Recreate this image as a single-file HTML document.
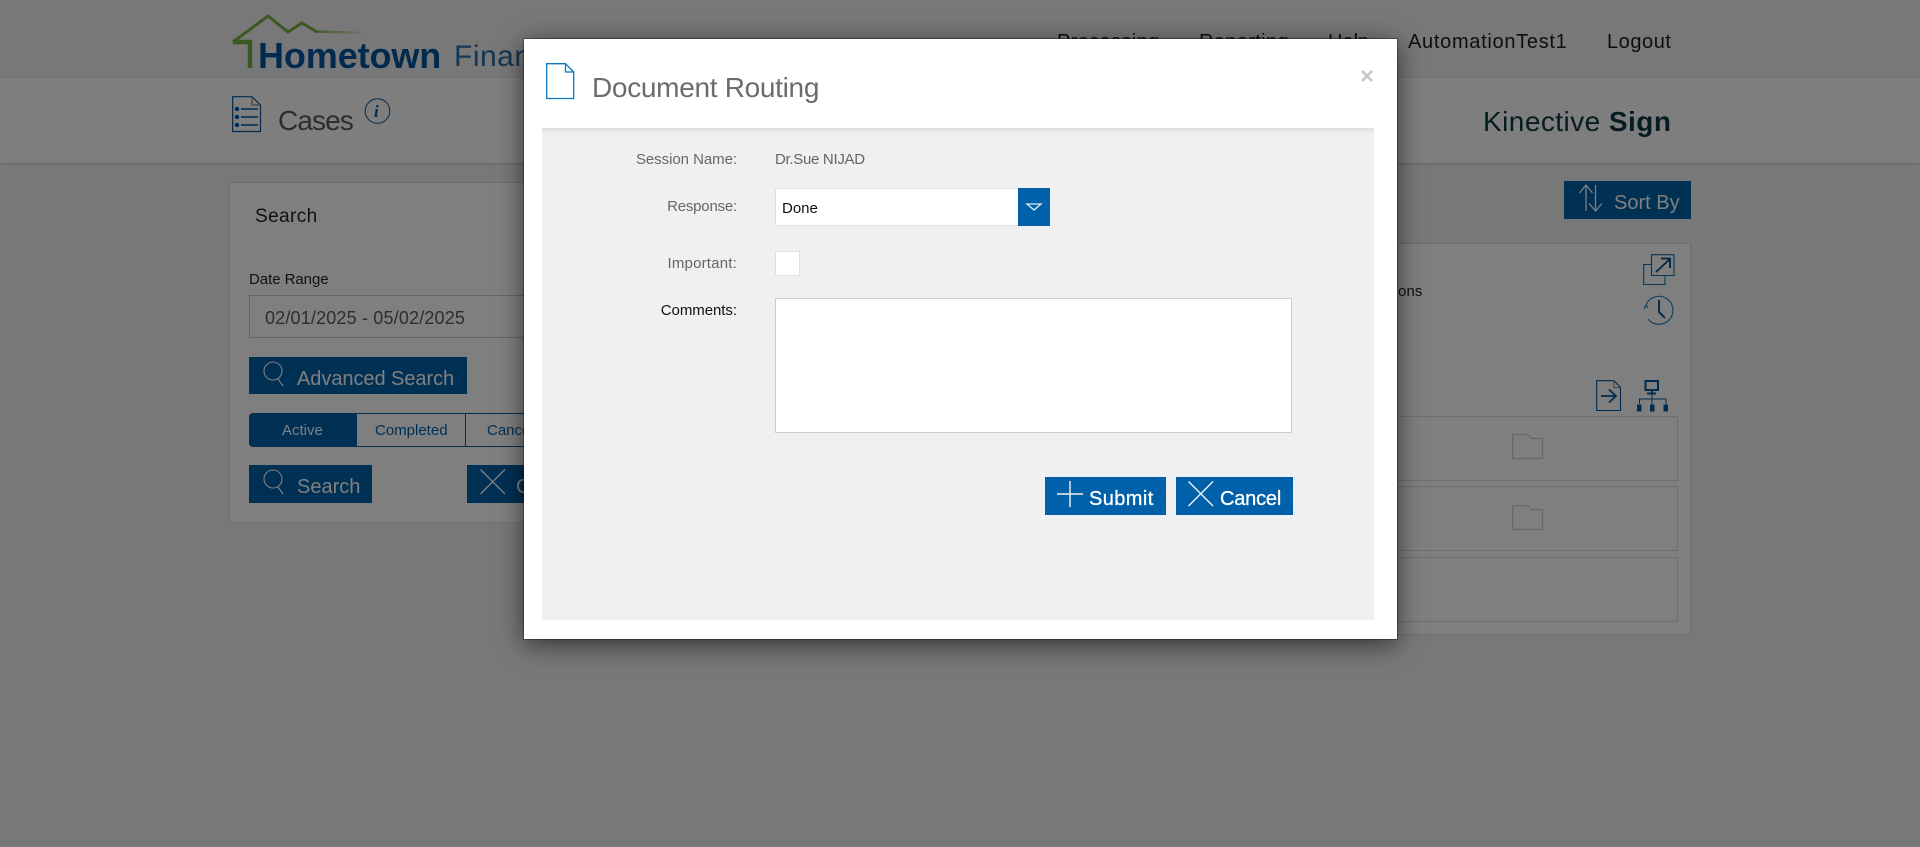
<!DOCTYPE html>
<html><head><meta charset="utf-8"><title>Document Routing</title>
<style>
*{box-sizing:border-box}
html,body{margin:0;padding:0;width:1920px;height:847px;overflow:hidden;background:#f1f1f1;font-family:"Liberation Sans",sans-serif}
.t{position:absolute;white-space:nowrap;line-height:1}
.b{position:absolute;background:#0060a9}
svg{position:absolute;overflow:visible}
#overlay{position:absolute;left:0;top:0;width:1920px;height:847px;background:rgba(0,0,0,.5)}
#modal{position:absolute;left:524px;top:39px;width:873px;height:600px;background:#fff;outline:1px solid rgba(0,0,0,.3);box-shadow:0 5px 24px rgba(0,0,0,.6)}
</style></head><body>
<!-- page -->
<div style="position:absolute;left:0;top:0;width:1920px;height:78px;background:#f0f0f0"></div>
<div style="position:absolute;left:0;top:78px;width:1920px;height:85px;background:#fdfdfd;box-shadow:0 1px 3px rgba(0,0,0,.15)"></div>
<svg style="left:0;top:0" width="500" height="80" fill="none"><defs><linearGradient id="g" x1="310" x2="367" y1="0" y2="0" gradientUnits="userSpaceOnUse"><stop offset="0" stop-color="#76b043"/><stop offset="1" stop-color="#76b043" stop-opacity="0"/></linearGradient></defs><path d="M233 42L268 16L288 32L302 23L317 32" stroke="#76b043" stroke-width="3"/><path d="M316 31.5L367 33" stroke="url(#g)" stroke-width="2.5"/><path d="M233 42H250V68" stroke="#76b043" stroke-width="4.5"/></svg>
<div class="t" style="left:258px;top:38px;font-size:36px;font-weight:bold;color:#00569c;letter-spacing:-.1px">Hometown</div>
<div class="t" style="left:454px;top:42px;font-size:30px;color:#2a6ca8;letter-spacing:.5px">Financial</div>
<div class="t" style="left:1057px;top:32px;font-size:20px;color:#1c1c1c;letter-spacing:.35px">Processing</div>
<div class="t" style="left:1199px;top:32px;font-size:20px;color:#1c1c1c;letter-spacing:.35px">Reporting</div>
<div class="t" style="left:1328px;top:32px;font-size:20px;color:#1c1c1c">Help</div>
<div class="t" style="left:1408px;top:32px;font-size:20px;color:#1c1c1c;letter-spacing:.7px">AutomationTest1</div>
<div class="t" style="left:1607px;top:32px;font-size:20px;color:#1c1c1c;letter-spacing:.55px">Logout</div>
<svg style="left:232px;top:96px" width="30" height="37" fill="none" stroke="#00569c" stroke-width="1.2"><path d="M.7.7H20L28.5 9V35.5H.7Z"/><path d="M20 .7V9H28.5" stroke="#888"/><path d="M9 13H26M9 21H26M9 29H26" stroke-width="1.5"/><circle cx="5" cy="13" r="1.6" fill="#00569c"/><circle cx="5" cy="21" r="1.6" fill="#00569c"/><circle cx="5" cy="29" r="1.6" fill="#00569c"/></svg>
<div class="t" style="left:278px;top:107px;font-size:28px;color:#5a5a5a;letter-spacing:-.9px">Cases</div>
<svg style="left:364px;top:97px" width="28" height="28" fill="none"><circle cx="13.5" cy="14" r="12.3" stroke="#00569c" stroke-width="1"/></svg>
<div class="t" style="left:372px;top:102px;font:italic bold 17px 'Liberation Serif',serif;color:#00569c;margin-left:2px">i</div>
<div class="t" style="left:1483px;top:108px;font-size:28px;color:#0a3a40;letter-spacing:.45px">Kinective <b>Sign</b></div>

<!-- search panel -->
<div style="position:absolute;left:229px;top:182px;width:560px;height:341px;background:#fff;border:1px solid #ddd"></div>
<div class="t" style="left:255px;top:207px;font-size:19px;color:#222;letter-spacing:.4px">Search</div>
<div class="t" style="left:249px;top:272px;font-size:15px;color:#222;letter-spacing:-.05px">Date Range</div>
<div style="position:absolute;left:249px;top:295px;width:400px;height:43px;border:1px solid #ccc;background:#fff"></div>
<div class="t" style="left:265px;top:309px;font-size:18px;color:#5c5c5c;letter-spacing:.17px">02/01/2025 - 05/02/2025</div>
<div class="b" style="left:249px;top:357px;width:218px;height:37px"></div>
<svg style="left:262px;top:361px" width="24" height="28" fill="none" stroke="#fff" stroke-width="1.1"><circle cx="11" cy="10" r="9"/><path d="M16 18L21 25"/></svg>
<div class="t" style="left:297px;top:369px;font-size:20px;color:#fff;letter-spacing:-.05px">Advanced Search</div>
<div class="b" style="left:249px;top:413px;width:108px;height:34px;border-radius:4px 0 0 4px"></div>
<div style="position:absolute;left:357px;top:413px;width:109px;height:34px;border:1px solid #0060a9;border-left:0;background:#fff"></div>
<div style="position:absolute;left:466px;top:413px;width:100px;height:34px;border:1px solid #0060a9;border-left:0;background:#fff"></div>
<div class="t" style="left:282px;top:423px;font-size:15px;color:#fff">Active</div>
<div class="t" style="left:375px;top:423px;font-size:15px;color:#0060a9">Completed</div>
<div class="t" style="left:487px;top:423px;font-size:15px;color:#0060a9">Cancelled</div>
<div class="b" style="left:249px;top:465px;width:123px;height:38px"></div>
<svg style="left:262px;top:469px" width="24" height="28" fill="none" stroke="#fff" stroke-width="1.1"><circle cx="11" cy="10" r="9"/><path d="M16 18L21 25"/></svg>
<div class="t" style="left:297px;top:477px;font-size:20px;color:#fff">Search</div>
<div class="b" style="left:467px;top:465px;width:120px;height:38px"></div>
<svg style="left:480px;top:469px" width="26" height="26" fill="none" stroke="#fff" stroke-width="1.3"><path d="M.5.5L25 25M25 .5L.5 25"/></svg>
<div class="t" style="left:516px;top:477px;font-size:20px;color:#fff">Clear</div>

<!-- right -->
<div class="b" style="left:1564px;top:181px;width:127px;height:38px"></div>
<svg style="left:1578px;top:184px" width="26" height="28" fill="none" stroke="#fff" stroke-width="1.3"><path d="M8 27V1M1.5 9L8 1L14.5 9"/><path d="M17.5 1V27M11 19.5L17.5 27L24 19.5"/></svg>
<div class="t" style="left:1614px;top:193px;font-size:20px;color:#fff">Sort By</div>
<div style="position:absolute;left:1200px;top:243px;width:491px;height:392px;background:#fff;border:1px solid #ddd"></div>
<div class="t" style="left:1398px;top:284px;font-size:15px;color:#222;letter-spacing:.1px">ons</div>
<svg style="left:1643px;top:254px" width="33" height="32" fill="none" stroke="#0a6fb5" stroke-width="1.1"><path d="M8.5 10.5H.7V30.5H22V21"/><path d="M8.5.7H31V21.5H8.5Z"/><path d="M13 18L27 5M18 4.5H27V14" stroke="#00487f" stroke-width="1.8"/></svg>
<svg style="left:1643px;top:294px" width="32" height="32" fill="none" stroke="#0a6fb5" stroke-width="1"><path d="M3 11A14 14 0 1 1 5 25" /><path d="M16 6V18L22 24" stroke-width="1.8" stroke="#00487f"/><path d="M1 15L3 11L5 14" /></svg>
<svg style="left:1596px;top:380px" width="26" height="32" fill="none" stroke="#00569c" stroke-width="1.1"><path d="M.7.7H18L24.5 7.5V30.5H.7Z"/><path d="M18 .7V7.5H24.5" stroke="#888"/><path d="M5 16H20M13 9.5L20 16L13 22.5" stroke-width="1.8"/></svg>
<svg style="left:1636px;top:380px" width="33" height="32" fill="none" stroke="#00569c"><path d="M9.5 1H22V10H9.5Z" stroke-width="2"/><path d="M15.8 10V13M11 13.5H20" stroke-width="2"/><path d="M3.5 24V19H30V24M16 14V24" stroke-width="1"/><path d="M1.5 25H5V31H1.5ZM14.5 25H18V31H14.5ZM28 25H31.5V31H28Z" fill="#00569c"/></svg>
<div style="position:absolute;left:1300px;top:416px;width:378px;height:65px;border:1px solid #ddd"></div>
<div style="position:absolute;left:1300px;top:486px;width:378px;height:65px;border:1px solid #ddd"></div>
<div style="position:absolute;left:1300px;top:557px;width:378px;height:65px;border:1px solid #ddd"></div>
<svg style="left:1512px;top:434px" width="32" height="26" fill="none" stroke="#ccc" stroke-width="1.2"><path d="M.7 24.5V.7H16L20 4.5H30.5V24.5Z"/></svg>
<svg style="left:1512px;top:505px" width="32" height="26" fill="none" stroke="#ccc" stroke-width="1.2"><path d="M.7 24.5V.7H16L20 4.5H30.5V24.5Z"/></svg>

<div id="overlay"></div>

<!-- modal -->
<div id="modal"></div>
<svg style="left:546px;top:63px" width="29" height="37" fill="none" stroke="#0a78bd" stroke-width="1.3"><path d="M.7.7H19.5L27.7 9V35.5H.7Z"/><path d="M19.5 .7V9H27.7"/></svg>
<div class="t" style="left:592px;top:74px;font-size:28px;color:#686d72;letter-spacing:-.3px">Document Routing</div>
<div class="t" style="left:1360px;top:63px;font:bold 24px 'Liberation Sans',sans-serif;color:#c8c8c8">×</div>
<div style="position:absolute;left:542px;top:128px;width:832px;height:492px;background:#f0f0f0;box-shadow:inset 0 5px 5px -3px rgba(0,0,0,.1)"></div>
<div style="position:absolute;left:542px;top:459px;width:813px;height:1px;background:#f2f2f2"></div>
<div class="t" style="right:1183px;top:152px;font-size:15px;color:#666;letter-spacing:-.05px">Session Name:</div>
<div class="t" style="left:775px;top:152px;font-size:15px;color:#666;letter-spacing:-.3px">Dr.Sue NIJAD</div>
<div class="t" style="right:1183px;top:199px;font-size:15px;color:#666;letter-spacing:-.2px">Response:</div>
<div style="position:absolute;left:775px;top:188px;width:244px;height:38px;background:#fff;border:1px solid #e0e0e0"></div>
<div class="t" style="left:782px;top:201px;font-size:15px;color:#111">Done</div>
<div class="b" style="left:1018px;top:188px;width:32px;height:38px"></div>
<svg style="left:1026px;top:203px" width="16" height="8" fill="none" stroke="#dff0ff" stroke-width="1.3"><path d="M1 1H15L8 7Z"/></svg>
<div class="t" style="right:1183px;top:256px;font-size:15px;color:#666;letter-spacing:.2px">Important:</div>
<div style="position:absolute;left:775px;top:251px;width:25px;height:25px;background:#fff;border:1px solid #e0e0e0"></div>
<div class="t" style="right:1183px;top:303px;font-size:15px;color:#111;letter-spacing:-.05px">Comments:</div>
<div style="position:absolute;left:775px;top:298px;width:517px;height:135px;background:#fff;border:1px solid #ccc"></div>
<div class="b" style="left:1045px;top:477px;width:121px;height:38px"></div>
<svg style="left:1057px;top:481px" width="26" height="26" fill="none" stroke="#f4f4f4" stroke-width="1.4"><path d="M13 0V26M0 13H26"/></svg>
<div class="t" style="left:1089px;top:489px;font-size:20px;color:#fff;letter-spacing:.4px;-webkit-text-stroke:.3px #fff">Submit</div>
<div class="b" style="left:1176px;top:477px;width:117px;height:38px"></div>
<svg style="left:1188px;top:481px" width="26" height="26" fill="none" stroke="#f4f4f4" stroke-width="1.4"><path d="M.5.5L25 25M25 .5L.5 25"/></svg>
<div class="t" style="left:1220px;top:489px;font-size:20px;color:#fff;letter-spacing:-.2px;-webkit-text-stroke:.3px #fff">Cancel</div>
</body></html>
